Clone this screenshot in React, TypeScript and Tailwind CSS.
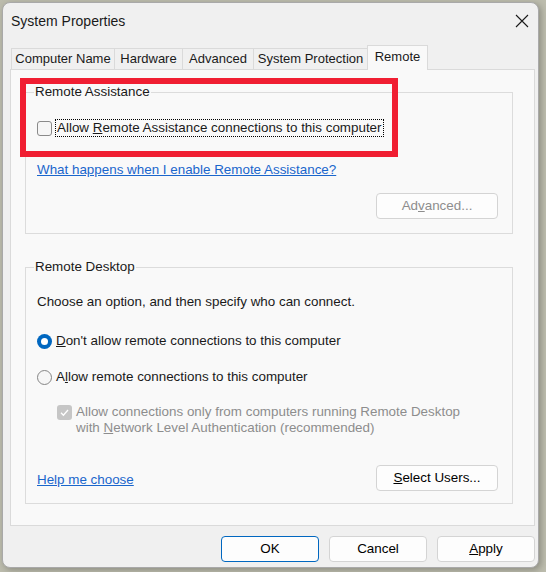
import React from 'react';

const tabs = [
  { label: 'Computer Name', w: 'w-[104px]' },
  { label: 'Hardware', w: 'w-[69px]' },
  { label: 'Advanced', w: 'w-[72px]' },
  { label: 'System Protection', w: 'w-[115px]' },
];

const Button: React.FC<{ children: React.ReactNode; className?: string; disabled?: boolean; primary?: boolean }> = ({
  children,
  className = '',
  disabled = false,
  primary = false,
}) => (
  <div
    className={`h-[26px] flex items-center justify-center rounded-[4px] border bg-[#fdfdfd] ${
      primary ? 'border-[#0067c0]' : 'border-[#d4d4d4]'
    } ${disabled ? 'text-[#8d8d8d]' : 'text-black'} ${className}`}
  >
    {children}
  </div>
);

const Checkbox: React.FC<{ checked?: boolean; disabled?: boolean }> = ({ checked = false, disabled = false }) =>
  checked ? (
    <div className={`w-[15px] h-[15px] rounded-[3px] flex items-center justify-center ${disabled ? 'bg-[#c6c6c6]' : 'bg-[#0067c0]'}`}>
      <svg width="11" height="11" viewBox="0 0 11 11" fill="none">
        <path d="M2 5.8 L4.4 8.2 L9 3" stroke="#ffffff" strokeWidth="1.3" />
      </svg>
    </div>
  ) : (
    <div className="w-[15px] h-[15px] rounded-[3px] border border-[#8a8a8a] bg-[#f6f6f6]" />
  );

const Radio: React.FC<{ checked?: boolean }> = ({ checked = false }) =>
  checked ? (
    <div className="w-[15px] h-[15px] rounded-full bg-[#0067c0] flex items-center justify-center">
      <div className="w-[7px] h-[7px] rounded-full bg-white" />
    </div>
  ) : (
    <div className="w-[15px] h-[15px] rounded-full border border-[#858585] bg-[#f6f6f6]" />
  );

export default function App() {
  return (
    <div className="w-[546px] h-[572px] overflow-hidden bg-[#bcbcad] font-['Liberation_Sans',Arial,sans-serif] text-[13.4px] leading-[16px] text-black">
      <div className="ml-[2px] mt-[2px] w-[537px] h-[566px] rounded-[8px] border border-[#a9a9a9] bg-[#f0f0f0] shadow-[2px_2px_6px_rgba(0,0,0,0.25)] flex flex-col">
        {/* title bar */}
        <div className="h-[36px] flex items-center justify-between pl-[8px] pr-[9px]">
          <span className="text-[14px] text-[#1a1a1a]">System Properties</span>
          <svg width="14" height="14" viewBox="0 0 14 14" fill="none">
            <path d="M1 1 L13 13 M13 1 L1 13" stroke="#1a1a1a" strokeWidth="1.1" />
          </svg>
        </div>

        {/* tabs */}
        <div className="mt-[6px] h-[24px] pl-[8px] flex items-end relative z-10 text-[13px]">
          {tabs.map((t) => (
            <div
              key={t.label}
              className={`${t.w} h-[21px] -mr-[1px] border border-b-0 border-[#dadada] bg-[#f0f0f0] flex items-center justify-center text-[#1a1a1a]`}
            >
              {t.label}
            </div>
          ))}
          <div className="w-[61px] h-[25px] -mb-[1px] border border-b-0 border-[#dadada] bg-[#f9f9f9] flex items-start justify-center pt-[3px] text-[#1a1a1a]">
            Remote
          </div>
        </div>

        {/* panel */}
        <div className="ml-[7px] w-[525px] h-[457px] border border-[#dadada] bg-[#f9f9f9] px-[14px] pt-[14px] relative text-[#1a1a1a]">
          <fieldset className="w-[488px] border border-[#dcdcdc] pl-[11px] pr-[14px] pb-[14px]">
            <legend className="-ml-[3px] px-[1px]">Remote Assistance</legend>
            <div className="mt-[20px] flex items-center gap-[4px]">
              <Checkbox />
              <span className="outline-1 outline-dotted outline-black px-[1px]">
                Allow <u>R</u>emote Assistance connections to this computer
              </span>
            </div>
            <div className="mt-[26px]">
              <span className="text-[#1a66cc] underline">What happens when I enable Remote Assistance?</span>
            </div>
            <div className="mt-[15px] flex justify-end">
              <Button disabled className="w-[122px]">
                Ad<u>v</u>anced...
              </Button>
            </div>
          </fieldset>

          <fieldset className="mt-[25px] w-[488px] border border-[#dcdcdc] pl-[11px] pr-[14px] pb-[12px]">
            <legend className="-ml-[3px] px-[1px]">Remote Desktop</legend>
            <div className="mt-[19px]">Choose an option, and then specify who can connect.</div>
            <div className="mt-[23px] flex items-center gap-[4px]">
              <Radio checked />
              <span>
                <u>D</u>on&apos;t allow remote connections to this computer
              </span>
            </div>
            <div className="mt-[20px] flex items-center gap-[4px]">
              <Radio />
              <span>
                A<u>l</u>low remote connections to this computer
              </span>
            </div>
            <div className="mt-[19px] pl-[20px] flex items-start gap-[4px] text-[#8d8d8d]">
              <div className="pt-[1px]">
                <Checkbox checked disabled />
              </div>
              <span>
                Allow connections only from computers running Remote Desktop
                <br />
                with <u>N</u>etwork Level Authentication (recommended)
              </span>
            </div>
            <div className="mt-[29px] flex items-center justify-between">
              <span className="text-[#1a66cc] underline mt-[3px]">Help me choose</span>
              <Button className="w-[122px]">
                <u>S</u>elect Users...
              </Button>
            </div>
          </fieldset>

          {/* annotation */}
          <div className="absolute left-[9px] top-[8px] w-[378px] h-[79px] border-[6px] border-[#f01e32]" />
        </div>

        {/* bottom buttons */}
        <div className="mt-[10px] flex justify-end gap-[10px] pr-[3px]">
          <Button primary className="w-[98px]">OK</Button>
          <Button className="w-[98px]">Cancel</Button>
          <Button className="w-[98px]">
            <u>A</u>pply
          </Button>
        </div>
      </div>
    </div>
  );
}
